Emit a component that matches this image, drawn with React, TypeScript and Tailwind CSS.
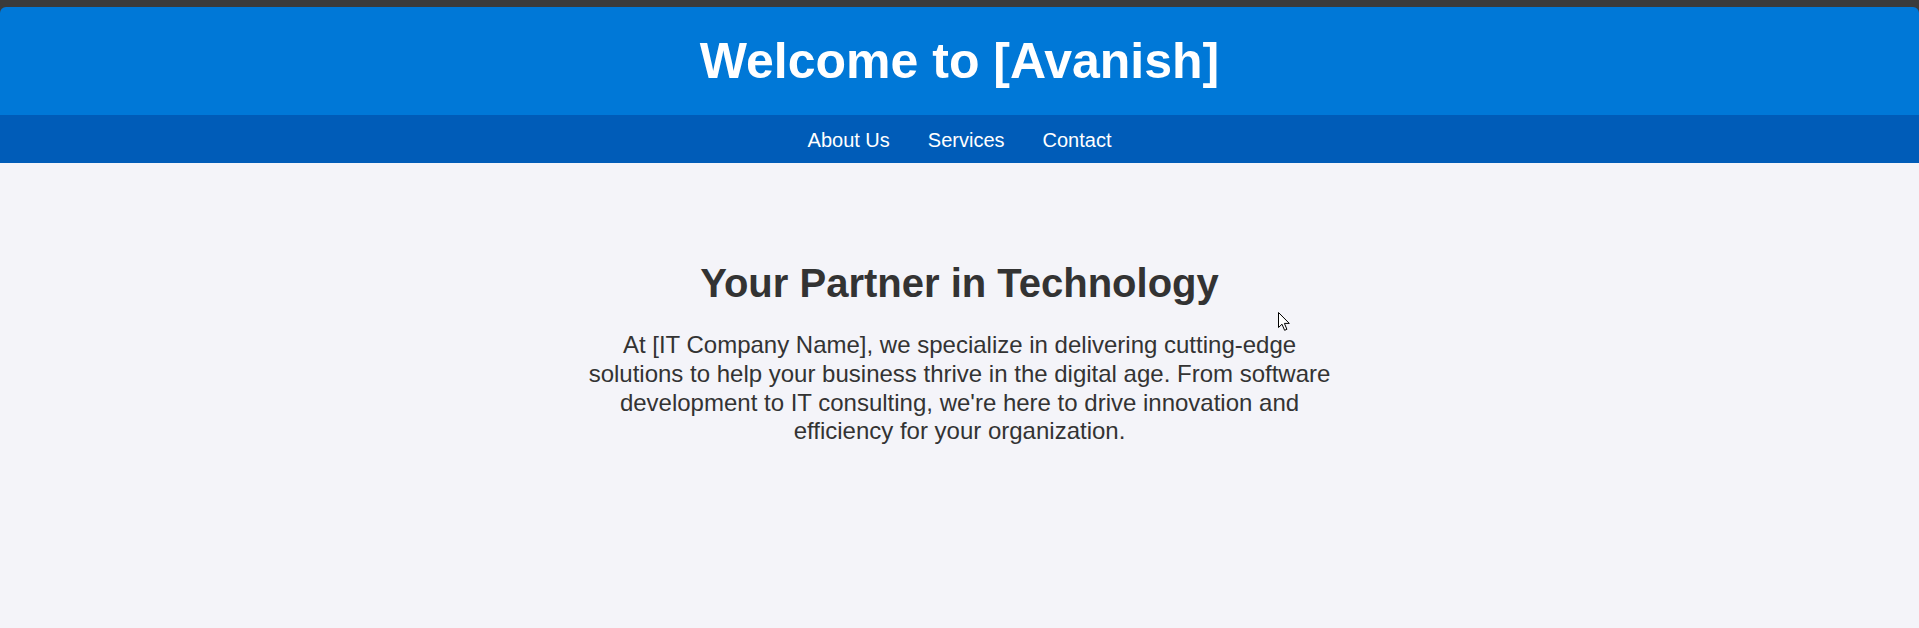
import React from "react";

export default function App() {
  return (
    <div
      className="relative min-h-screen w-full bg-[#f4f4f9]"
      style={{ fontFamily: '"Liberation Sans", Arial, sans-serif' }}
    >
      <div className="bg-[#3b3b3b] pt-[7px]">
        <header className="rounded-t-[6px] bg-[#0078d7] pt-[25px] pb-[25px] text-center">
          <h1 className="m-0 text-[50px] font-bold leading-[58px] text-white">
            Welcome to [Avanish]
          </h1>
        </header>
      </div>
      <nav className="flex h-[48px] items-start justify-center gap-[38px] bg-[#005cb8] pt-[14px]">
        <a href="#" className="text-[20px] leading-[23px] text-white">
          About Us
        </a>
        <a href="#" className="text-[20px] leading-[23px] text-white">
          Services
        </a>
        <a href="#" className="text-[20px] leading-[23px] text-white">
          Contact
        </a>
      </nav>
      <main className="flex flex-col items-center pt-[97px] text-center text-[#333333]">
        <h2 className="mb-[25px] text-[40px] font-bold leading-[46px]">
          Your Partner in Technology
        </h2>
        <p className="max-w-[750px] text-[24px] leading-[28.75px]">
          At [IT Company Name], we specialize in delivering cutting-edge
          solutions to help your business thrive in the digital age. From
          software development to IT consulting, we're here to drive
          innovation and efficiency for your organization.
        </p>
      </main>
      <svg
        className="pointer-events-none absolute left-[1278px] top-[312px]"
        width="13"
        height="20"
        viewBox="0 0 13 20"
      >
        <path
          d="M0.5 0.5 L0.5 15.5 L4 12.2 L6.6 18.3 L8.9 17.3 L6.4 11.4 L11.3 11.4 Z"
          fill="#ffffff"
          stroke="#000000"
          strokeWidth="1"
          strokeLinejoin="round"
        />
      </svg>
    </div>
  );
}
